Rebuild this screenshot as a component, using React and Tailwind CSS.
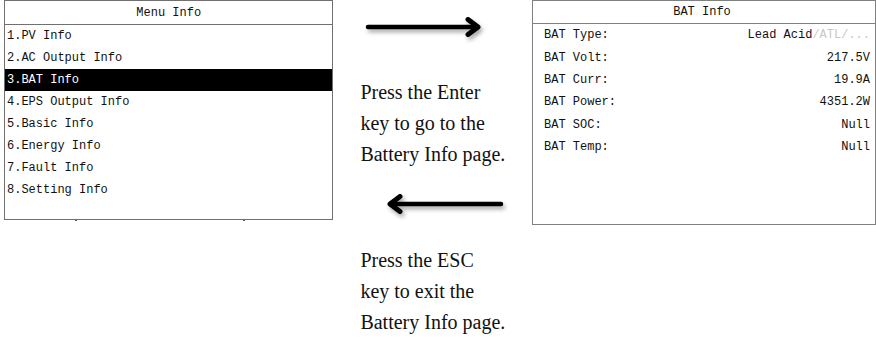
import React from 'react';

const menuItems = [
  '1.PV Info',
  '2.AC Output Info',
  '3.BAT Info',
  '4.EPS Output Info',
  '5.Basic Info',
  '6.Energy Info',
  '7.Fault Info',
  '8.Setting Info',
];

const batRows = [
  { label: 'BAT Type:', value: 'Lead Acid', extra: '/ATL/...' },
  { label: 'BAT Volt:', value: '217.5V' },
  { label: 'BAT Curr:', value: '19.9A' },
  { label: 'BAT Power:', value: '4351.2W' },
  { label: 'BAT SOC:', value: 'Null' },
  { label: 'BAT Temp:', value: 'Null' },
];

const mono = { fontFamily: '"Liberation Mono", "DejaVu Sans Mono", monospace' };

const Arrow = ({ left = false }) => (
  <svg
    width="120"
    height="22"
    viewBox="0 0 120 22"
    className="drop-shadow-[2px_3px_2px_rgba(0,0,0,0.35)]"
  >
    {left ? (
      <g stroke="#000" strokeWidth="4.5" strokeLinecap="round" strokeLinejoin="round" fill="none">
        <path d="M116 11 H6" />
        <path d="M15 3.5 L5 11 L15 18.5" strokeWidth="5" />
      </g>
    ) : (
      <g stroke="#000" strokeWidth="4.5" strokeLinecap="round" strokeLinejoin="round" fill="none">
        <path d="M4 11 H113" />
        <path d="M104 3.5 L114 11 L104 18.5" strokeWidth="5" />
      </g>
    )}
  </svg>
);

const Note = ({ lines }) => (
  <div
    className="text-[20px] leading-[31px] text-[#111]"
    style={{ fontFamily: '"Liberation Serif", "Times New Roman", serif' }}
  >
    {lines.map((l) => (
      <div key={l}>{l}</div>
    ))}
  </div>
);

export default function App() {
  return (
    <div className="w-[876px] h-[347px] overflow-hidden bg-white flex items-start">
      {/* Menu panel */}
      <div
        className="relative ml-[4px] w-[330px] h-[220px] border border-[#707070] text-[12px] text-[#111] flex flex-col"
        style={mono}
      >
        <div className="h-[24px] border-b border-[#707070] flex items-center justify-center">
          Menu Info
        </div>
        {menuItems.map((item, i) => (
          <div
            key={item}
            className={
              i === 2
                ? 'h-[22px] flex items-center pl-[2px] bg-black text-white'
                : 'h-[22px] flex items-center pl-[2px]'
            }
          >
            {item}
          </div>
        ))}
        <span className="absolute left-[70px] -bottom-[2px] w-[2px] h-[1px] bg-[#555]" />
        <span className="absolute left-[238px] -bottom-[2px] w-[2px] h-[1px] bg-[#555]" />
      </div>

      {/* Instructions */}
      <div className="w-[199px] flex flex-col">
        <div className="pt-[16px] pl-[31px]">
          <Arrow />
        </div>
        <div className="mt-[39px] pl-[27px]">
          <Note lines={['Press the Enter', 'key to go to the', 'Battery Info page.']} />
        </div>
        <div className="mt-[23px] pl-[52px]">
          <Arrow left />
        </div>
        <div className="mt-[30px] pl-[27px]">
          <Note lines={['Press the ESC', 'key to exit the', 'Battery Info page.']} />
        </div>
      </div>

      {/* BAT panel */}
      <div
        className="w-[344px] h-[225px] border border-[#808080] text-[12px] text-[#111] flex flex-col shrink-0"
        style={mono}
      >
        <div className="h-[23px] border-b border-[#808080] flex items-center justify-center pr-[4px]">
          BAT Info
        </div>
        {batRows.map((r) => (
          <div key={r.label} className="h-[22.4px] flex items-center justify-between pl-[11px] pr-[5px]">
            <span>{r.label}</span>
            <span>
              {r.value}
              {r.extra && <span className="text-[#c8c8c8]">{r.extra}</span>}
            </span>
          </div>
        ))}
      </div>
    </div>
  );
}
